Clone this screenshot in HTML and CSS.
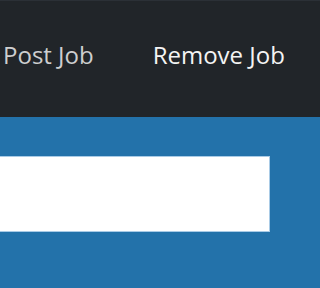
FILE: index.html
```html
<!DOCTYPE html>
<html>
<head>
<meta charset="utf-8">
<link rel="stylesheet" href="styles.css">
</head>
<body>
<nav class="navbar">
  <a class="nav-link" href="#">Post Job</a>
  <a class="nav-link active" href="#">Remove Job</a>
</nav>
<section class="hero">
  <input class="search" type="text" aria-label="search">
</section>
</body>
</html>
```
FILE: styles.css
```css
html, body {
  margin: 0;
  padding: 0;
}
body {
  background: #2372aa;
  font-family: "Open Sans", "Noto Sans", sans-serif;
  overflow: hidden;
}
.navbar {
  height: 117px;
  background: #212529;
  display: flex;
  align-items: center;
  gap: 59px;
  padding-left: 3px;
  padding-bottom: 8px;
  box-sizing: border-box;
  border-top: 1px solid #2b3036;
}
.nav-link {
  font-size: 24px;
  line-height: 1;
  text-decoration: none;
  color: rgba(255, 255, 255, 0.78);
  white-space: nowrap;
}
.nav-link.active {
  color: #f4f4f4;
}
.hero {
  padding-top: 39px;
  height: 171px;
  box-sizing: border-box;
}
.search {
  display: block;
  margin: 0 0 0 -10px;
  width: 280px;
  height: 76px;
  box-sizing: border-box;
  border: 1px solid #a9cbe6;
  background: #fff;
  padding: 0;
  outline: none;
}
```
